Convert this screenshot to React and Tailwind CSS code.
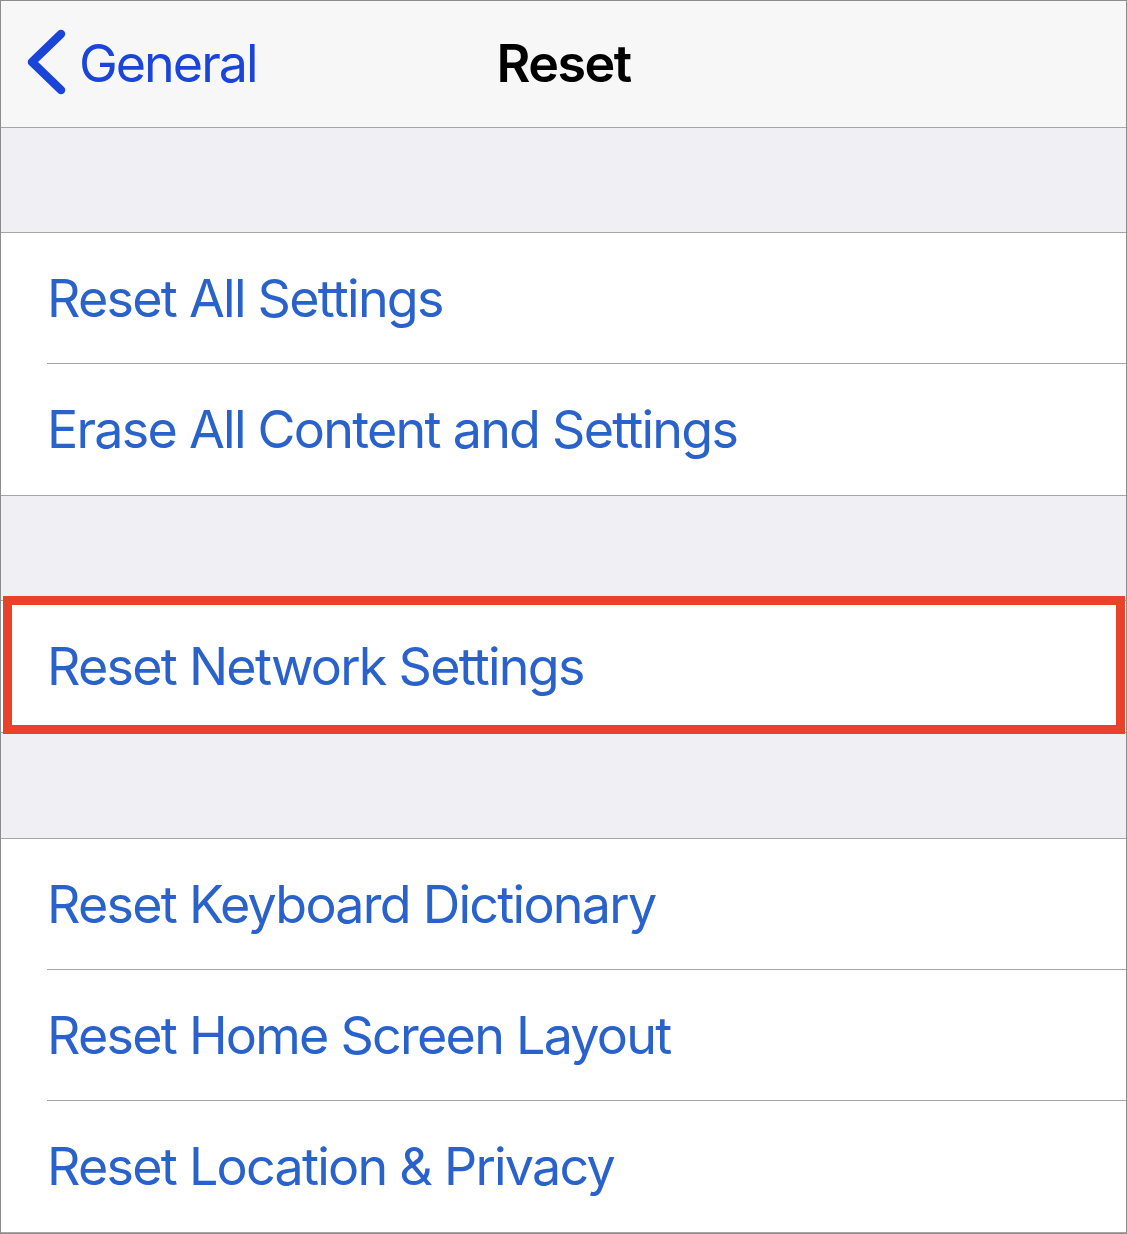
import React from 'react';

const rowFont = { fontFamily: 'Inter, "Noto Sans", sans-serif' };

function Row({ label, sep }) {
  return (
    <div className="relative h-[131px] bg-white">
      <div className="flex h-full items-center pl-[46px] text-[52px] tracking-[-1.75px] text-[#2a62cb]" style={rowFont}>
        {label}
      </div>
      {sep && <div className="absolute bottom-0 left-[46px] right-0 h-px bg-[#a6a6a6]"></div>}
    </div>
  );
}

function Group({ items }) {
  return (
    <div className="border-y border-[#a6a6a6]">
      {items.map((label, i) => (
        <Row key={label} label={label} sep={i < items.length - 1} />
      ))}
    </div>
  );
}

export default function App() {
  return (
    <div className="h-[1234px] w-[1127px] overflow-hidden border border-[#8c8c8c] bg-[#efeff4]" style={rowFont}>
      {/* Nav bar */}
      <div className="relative flex h-[127px] items-center border-b border-[#a6a6a6] bg-[#f7f7f7]">
        <div className="flex items-center">
          <svg width="78" height="126" viewBox="0 0 78 126" className="shrink-0">
            <path d="M60 33 L31 61 L60 89" fill="none" stroke="#1b45d9" strokeWidth="8.5" strokeLinecap="round" strokeLinejoin="round" />
          </svg>
          <span className="text-[52px] text-[#1b45d9] tracking-[-2px]">General</span>
        </div>
        <div className="absolute inset-0 flex items-center justify-center pointer-events-none">
          <span className="text-[52px] font-semibold text-black tracking-[-1.5px]">Reset</span>
        </div>
      </div>

      <div className="h-[104px]"></div>
      <Group items={['Reset All Settings', 'Erase All Content and Settings']} />

      <div className="h-[104px]"></div>
      <div className="relative">
        <Group items={['Reset Network Settings']} />
        {/* highlight */}
        <div className="absolute left-[2px] right-[1px] top-[-4px] bottom-[-1px] border-[9px] border-[#e8432a]"></div>
      </div>

      <div className="h-[105px]"></div>
      <Group items={['Reset Keyboard Dictionary', 'Reset Home Screen Layout', 'Reset Location & Privacy']} />
    </div>
  );
}
